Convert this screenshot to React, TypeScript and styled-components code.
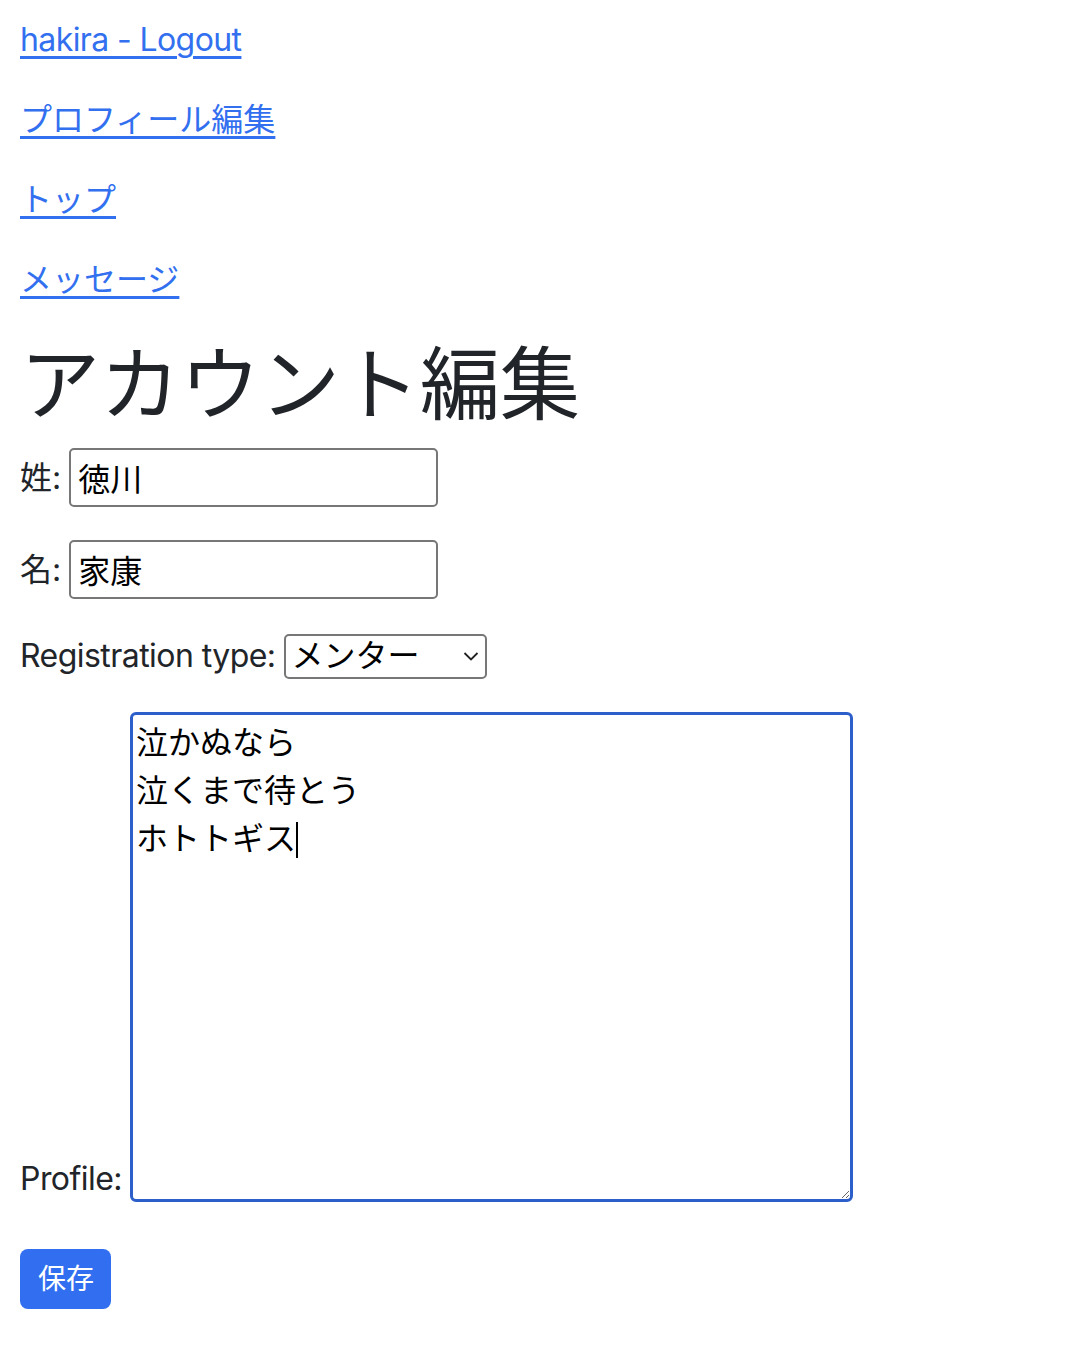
import React from "react";
import styled, { createGlobalStyle } from "styled-components";

const GlobalStyle = createGlobalStyle`
  html, body {
    margin: 0;
    padding: 0;
    background: #ffffff;
  }
  body {
    font-family: Inter, "Noto Sans CJK JP", sans-serif;
    font-size: 32px;
    line-height: 48px;
    color: #212529;
  }
`;

const Page = styled.div`
  padding: 16px 20px 40px;
`;

const NavItem = styled.p`
  margin: 0 0 32px;
`;

const NavLink = styled.a<{ $latin?: boolean }>`
  color: #3270ef;
  text-decoration: underline;
  text-decoration-thickness: 3px;
  text-underline-offset: 5px;
  letter-spacing: ${(p) => (p.$latin ? "-0.6px" : "0")};
`;

const Title = styled.h1`
  margin: 0 0 16px;
  font-size: 80px;
  line-height: 96px;
  font-weight: 400;
  color: #212529;
`;

const FieldRow = styled.div<{ $align?: string; $mb?: number }>`
  display: flex;
  align-items: ${(p) => p.$align ?? "center"};
  gap: 8px;
  margin-bottom: ${(p) => p.$mb ?? 33}px;
`;

const Label = styled.label<{ $lift?: number; $latin?: boolean }>`
  font-size: 32px;
  line-height: 48px;
  color: #212529;
  letter-spacing: ${(p) => (p.$latin ? "-0.55px" : "0")};
  margin-bottom: ${(p) => p.$lift ?? 0}px;
`;

const TextInput = styled.input`
  box-sizing: border-box;
  width: 369px;
  height: 59px;
  border: 2px solid #777777;
  border-radius: 5px;
  padding: 0 7px 2px;
  font-family: inherit;
  font-size: 32px;
  color: #000000;
  background: #ffffff;
  outline: none;
`;

const SelectWrap = styled.div`
  position: relative;
  display: flex;
`;

const Select = styled.select`
  box-sizing: border-box;
  width: 203px;
  height: 45px;
  border: 2px solid #777777;
  border-radius: 5px;
  padding: 0 6px;
  font-family: inherit;
  font-size: 32px;
  line-height: 40px;
  color: #000000;
  background: #ffffff;
  appearance: none;
  -webkit-appearance: none;
  outline: none;
`;

const Chevron = styled.svg`
  position: absolute;
  right: 8px;
  top: 16px;
  width: 16px;
  height: 12px;
  pointer-events: none;
`;

const AreaWrap = styled.div`
  position: relative;
  display: flex;
`;

const TextArea = styled.textarea`
  box-sizing: border-box;
  width: 723px;
  height: 490px;
  border: 3px solid #2c5fca;
  border-radius: 6px;
  padding: 4px 3px 2px;
  font-family: inherit;
  font-size: 32px;
  line-height: 48px;
  color: #000000;
  background: #ffffff;
  outline: none;
  resize: both;
  margin: 0;
`;

const Caret = styled.span`
  position: absolute;
  left: 166px;
  top: 110px;
  width: 2px;
  height: 36px;
  background: #000000;
`;

const SaveButton = styled.button`
  box-sizing: border-box;
  height: 60px;
  padding: 0 17px 0 18px;
  border: none;
  border-radius: 8px;
  background: #316ff0;
  color: #ffffff;
  font-family: inherit;
  font-size: 28px;
  line-height: 42px;
  cursor: pointer;
`;

const profileText = "泣かぬなら\n泣くまで待とう\nホトトギス";

export default function App() {
  return (
    <>
      <GlobalStyle />
      <Page>
        <NavItem>
          <NavLink href="#" $latin>hakira - Logout</NavLink>
        </NavItem>
        <NavItem>
          <NavLink href="#">プロフィール編集</NavLink>
        </NavItem>
        <NavItem>
          <NavLink href="#">トップ</NavLink>
        </NavItem>
        <NavItem>
          <NavLink href="#">メッセージ</NavLink>
        </NavItem>
        <Title>アカウント編集</Title>
        <form onSubmit={(e) => e.preventDefault()}>
          <FieldRow>
            <Label htmlFor="last">姓:</Label>
            <TextInput id="last" defaultValue="徳川" />
          </FieldRow>
          <FieldRow>
            <Label htmlFor="first">名:</Label>
            <TextInput id="first" defaultValue="家康" />
          </FieldRow>
          <FieldRow $mb={32}>
            <Label htmlFor="type" $latin>Registration type:</Label>
            <SelectWrap>
              <Select id="type" defaultValue="mentor">
                <option value="mentor">メンター</option>
                <option value="mentee">メンティー</option>
              </Select>
              <Chevron viewBox="0 0 16 12">
                <path d="M1.5 3 L8 9.5 L14.5 3" fill="none" stroke="#222" strokeWidth="1.8" />
              </Chevron>
            </SelectWrap>
          </FieldRow>
          <FieldRow $align="flex-end" $mb={47}>
            <Label htmlFor="profile" $latin $lift={-1}>Profile:</Label>
            <AreaWrap>
              <TextArea id="profile" defaultValue={profileText} />
              <Caret />
            </AreaWrap>
          </FieldRow>
          <SaveButton type="submit">保存</SaveButton>
        </form>
      </Page>
    </>
  );
}
